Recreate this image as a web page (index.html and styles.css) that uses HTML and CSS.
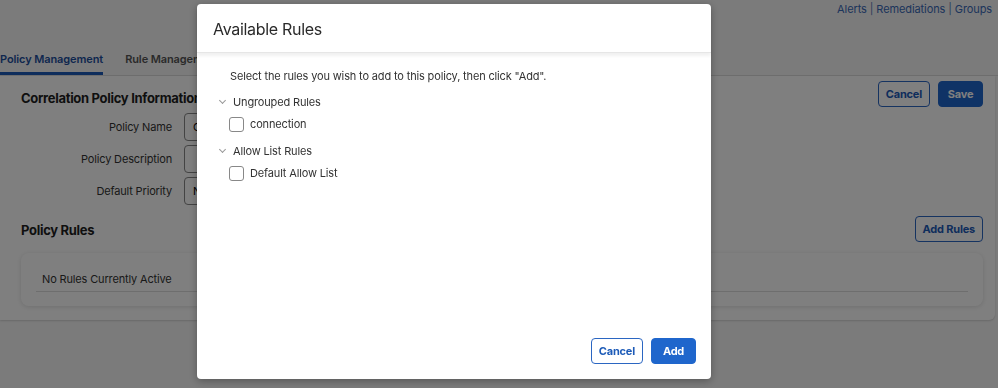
FILE: index.html
```html
<!DOCTYPE html>
<html lang="en">
<head>
  <meta charset="UTF-8">
  <title>Correlation Policy</title>
  <link rel="stylesheet" href="styles.css">
</head>
<body>

  <!-- Top links -->
  <div class="top-links">
    <a href="#">Alerts</a> | <a href="#">Remediations</a> | <a href="#">Groups</a>
  </div>

  <!-- Tabs -->
  <div class="tabs">
    <span class="tab active">Policy Management</span>
    <span class="tab">Rule Management</span>
  </div>

  <!-- Policy panel -->
  <div class="panel">
    <div class="section-head">
      <h3>Correlation Policy Information</h3>
      <div class="actions">
        <button class="btn btn-outline">Cancel</button>
        <button class="btn btn-primary">Save</button>
      </div>
    </div>

    <div class="form-row">
      <label>Policy Name</label>
      <input type="text" value="Connection Policy">
    </div>
    <div class="form-row">
      <label>Policy Description</label>
      <input type="text">
    </div>
    <div class="form-row">
      <label>Default Priority</label>
      <input type="text" value="None">
    </div>

    <div class="section-head rules-head">
      <h3>Policy Rules</h3>
      <button class="btn btn-outline">Add Rules</button>
    </div>

    <div class="card">
      <div class="empty">No Rules Currently Active</div>
    </div>
  </div>

  <!-- Modal -->
  <div class="overlay"></div>
  <div class="modal">
    <div class="modal-header">Available Rules</div>
    <div class="modal-body">
      <p class="hint">Select the rules you wish to add to this policy, then click "Add".</p>

      <div class="group">
        <div class="group-title"><span class="chev"></span>Ungrouped Rules</div>
        <label class="rule"><span class="box"></span>connection</label>
      </div>

      <div class="group">
        <div class="group-title"><span class="chev"></span>Allow List Rules</div>
        <label class="rule"><span class="box"></span>Default Allow List</label>
      </div>
    </div>
    <div class="modal-footer">
      <button class="btn btn-outline">Cancel</button>
      <button class="btn btn-primary">Add</button>
    </div>
  </div>

</body>
</html>
```

FILE: styles.css
```css
/* Basic page styles */
body, html {
  margin: 0;
  padding: 0;
  font-family: Inter, "Open Sans", sans-serif;
  background-color: #f6f6f6;
  color: #222;
  height: 100%;
  overflow: hidden;
}

/* Top links */
.top-links {
  height: 18px;
  text-align: right;
  font-size: 11px;
  letter-spacing: -0.1px;
  line-height: 18px;
  padding-right: 6px;
  color: #5b7fb8;
}

.top-links a {
  color: #3a6ab8;
  text-decoration: none;
}

/* Tabs */
.tabs {
  display: flex;
  gap: 22px;
  margin-top: 30px;
  border-bottom: 1px solid #ddd;
}

.tab {
  font-size: 11px;
  line-height: 13px;
  letter-spacing: -0.1px;
  font-weight: 600;
  color: #555;
  padding: 5px 0 6px;
  border-bottom: 3px solid transparent;
}

.tab.active {
  color: #1d4f9e;
  border-bottom-color: #1d5bb8;
}

/* Panel */
.panel {
  background-color: #fff;
  margin-right: 3px;
  padding: 5px 12px 14px 21px;
  border-radius: 0 0 6px 0;
  box-shadow: 0 1px 2px rgba(0, 0, 0, 0.15);
}

.section-head {
  display: flex;
  justify-content: space-between;
  align-items: flex-start;
  margin-bottom: 6px;
}

.section-head h3 {
  margin: 9px 0 0;
  font-size: 13px;
  line-height: 16px;
  letter-spacing: -0.3px;
  font-weight: 700;
  color: #1e1e1e;
}

.actions {
  display: flex;
  gap: 8px;
}

.form-row {
  display: flex;
  align-items: center;
  gap: 12px;
  margin-bottom: 4px;
}

.form-row label {
  width: 151px;
  text-align: right;
  font-size: 11px;
  letter-spacing: -0.15px;
  color: #333;
}

.form-row input {
  width: 420px;
  height: 28px;
  padding: 0 8px;
  border: 1px solid #888;
  border-radius: 4px;
  font-family: inherit;
  font-size: 11px;
  box-sizing: border-box;
}

.rules-head {
  margin-top: 11px;
  margin-bottom: 11px;
}

.rules-head h3 {
  margin-top: 6px;
}

/* Buttons */
.btn {
  font-family: inherit;
  font-size: 11px;
  letter-spacing: -0.2px;
  font-weight: 700;
  height: 26px;
  min-width: 45px;
  padding: 0 7px;
  border-radius: 4px;
  cursor: pointer;
}

.btn-outline {
  background-color: #fff;
  color: #1d5bb8;
  border: 1.5px solid #2b66c2;
}

.btn-primary {
  background-color: #1f66cc;
  color: #fff;
  border: 1.5px solid #1f66cc;
}

/* Rules card */
.card {
  border-radius: 8px;
  box-shadow: 0 1px 5px rgba(0, 0, 0, 0.13);
  padding: 20px 15px 14px;
}

.empty {
  font-size: 11px;
  line-height: 13px;
  letter-spacing: -0.15px;
  color: #333;
  padding: 0 0 5px 6px;
  border-bottom: 1px solid #ddd;
}

/* Overlay and modal */
.overlay {
  position: fixed;
  inset: 0;
  background-color: rgba(0, 0, 0, 0.5);
}

.modal {
  position: fixed;
  left: 197px;
  top: 4px;
  width: 514px;
  height: 375px;
  background-color: #fff;
  border-radius: 4px;
  display: flex;
  flex-direction: column;
  box-shadow: 0 2px 8px rgba(0, 0, 0, 0.3);
}

.modal-header {
  height: 48px;
  line-height: 50px;
  padding: 0 16px;
  font-size: 16px;
  letter-spacing: -0.3px;
  color: #2a2a2a;
  border-bottom: 1px solid #e6e6e6;
  box-shadow: 0 3px 3px rgba(0, 0, 0, 0.06);
}

.modal-body {
  flex: 1;
  padding: 17px 22px 0 22px;
  font-size: 11px;
  letter-spacing: -0.15px;
  line-height: 13px;
  color: #333;
}

.hint {
  margin: 0 0 12px 11px;
}

.group {
  margin-bottom: 12px;
}

.group-title {
  display: flex;
  align-items: center;
  height: 14px;
}

.chev {
  width: 4px;
  height: 4px;
  border-right: 1px solid #999;
  border-bottom: 1px solid #999;
  transform: rotate(45deg);
  margin: -3px 8px 0 1px;
}

.rule {
  display: flex;
  align-items: center;
  gap: 6px;
  margin: 8px 0 0 10px;
}

.box {
  width: 13px;
  height: 13px;
  border: 1px solid #888;
  border-radius: 3px;
}

.modal-footer {
  display: flex;
  justify-content: flex-end;
  gap: 8px;
  padding: 0 15px 15px;
}
```
